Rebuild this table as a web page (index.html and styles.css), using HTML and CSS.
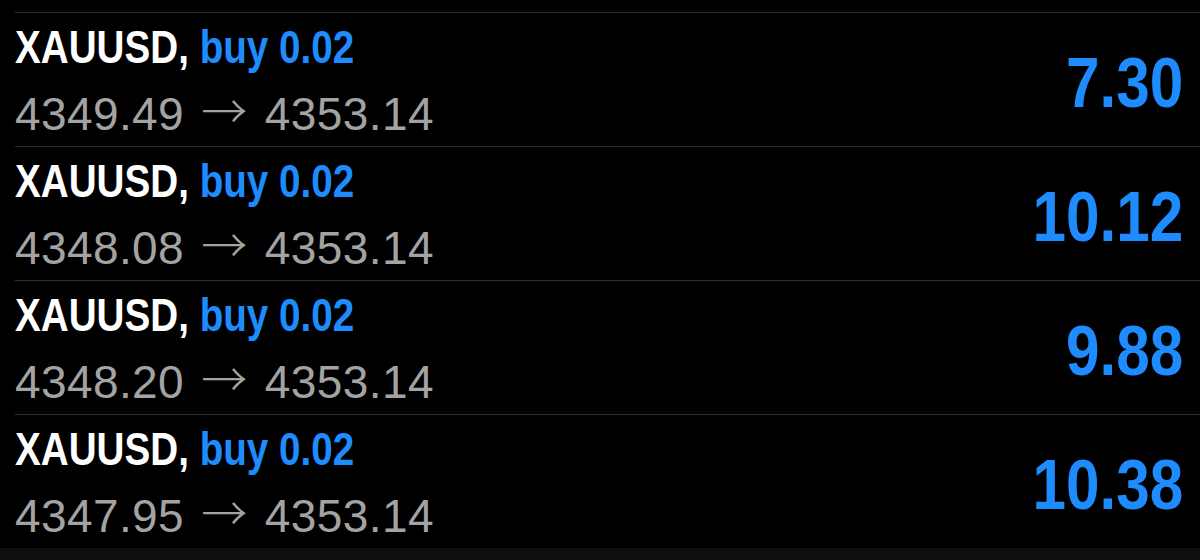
FILE: index.html
```
<!DOCTYPE html>
<html lang="en">

<head>
  <meta charset="UTF-8">
  <meta name="viewport" content="width=device-width, initial-scale=1.0">
  <title>Positions</title>
  <link rel="stylesheet" href="styles.css">
</head>

<body>
  <div class="positions">
    <div class="position">
      <div class="info">
        <div class="title"><span class="symbol">XAUUSD,</span> <span class="side">buy 0.02</span></div>
        <div class="prices">4349.49 <span class="arrow">→</span> 4353.14</div>
      </div>
      <div class="profit">7.30</div>
    </div>

    <div class="position">
      <div class="info">
        <div class="title"><span class="symbol">XAUUSD,</span> <span class="side">buy 0.02</span></div>
        <div class="prices">4348.08 <span class="arrow">→</span> 4353.14</div>
      </div>
      <div class="profit">10.12</div>
    </div>

    <div class="position">
      <div class="info">
        <div class="title"><span class="symbol">XAUUSD,</span> <span class="side">buy 0.02</span></div>
        <div class="prices">4348.20 <span class="arrow">→</span> 4353.14</div>
      </div>
      <div class="profit">9.88</div>
    </div>

    <div class="position">
      <div class="info">
        <div class="title"><span class="symbol">XAUUSD,</span> <span class="side">buy 0.02</span></div>
        <div class="prices">4347.95 <span class="arrow">→</span> 4353.14</div>
      </div>
      <div class="profit">10.38</div>
    </div>
  </div>

  <div class="bottom-bar"></div>
</body>

</html>
```

FILE: styles.css
```
body {
  font-family: "Liberation Sans", Arial, sans-serif;
  background-color: #000;
  margin: 0;
  padding: 0;
  height: 560px;
  display: flex;
  flex-direction: column;
  overflow: hidden;
}

.positions {
  padding-top: 12px;
}

.position {
  display: flex;
  justify-content: space-between;
  align-items: flex-start;
  height: 134px;
  box-sizing: border-box;
  margin-left: 15px;
  padding: 11px 17px 0 0;
  border-top: 1px solid #2f2f2f;
}

.info {
  display: flex;
  flex-direction: column;
}

.title {
  font-size: 46px;
  line-height: 46px;
  font-weight: bold;
  white-space: nowrap;
  transform: scaleX(0.84);
  transform-origin: left center;
}

.symbol {
  color: #fff;
}

.side {
  color: #1e8cff;
}

.prices {
  margin-top: 18px;
  font-size: 46px;
  line-height: 45px;
  letter-spacing: 0.4px;
  color: #a3a3a3;
  white-space: nowrap;
}

.arrow {
  font-family: "Noto Sans CJK JP", "DejaVu Sans", sans-serif;
  font-size: 46px;
  font-weight: 300;
  margin: 0 4px;
  position: relative;
  top: -2px;
}

.profit {
  margin-top: 24px;
  font-size: 70px;
  line-height: 70px;
  font-weight: bold;
  color: #1e8cff;
  transform: scaleX(0.86);
  transform-origin: right center;
}

.bottom-bar {
  flex: 1;
  background-color: #0f0f0f;
}
```
